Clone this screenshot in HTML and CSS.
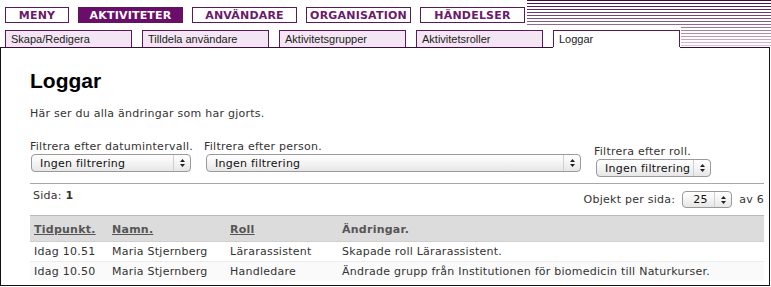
FILE: index.html
```html
<!DOCTYPE html>
<html lang="sv">
<head>
    <meta charset="UTF-8">
    <title>Loggar</title>
    <link rel="stylesheet" href="styles.css">
</head>
<body>
    <div class="header">
        <div class="nav-bar">
            <a class="nav-btn menu">MENY</a>
            <a class="nav-btn active">AKTIVITETER</a>
            <a class="nav-btn">ANVÄNDARE</a>
            <a class="nav-btn">ORGANISATION</a>
            <a class="nav-btn">HÄNDELSER</a>
        </div>
        <div class="tab-bar">
            <a class="tab">Skapa/Redigera</a>
            <a class="tab">Tilldela användare</a>
            <a class="tab">Aktivitetsgrupper</a>
            <a class="tab">Aktivitetsroller</a>
            <a class="tab active">Loggar</a>
        </div>
    </div>

    <div class="main">
        <h1>Loggar</h1>
        <p class="intro">Här ser du alla ändringar som har gjorts.</p>

        <div class="filters">
            <div class="filter">
                <div class="filter-label">Filtrera efter datumintervall.</div>
                <div class="select date-select">
                    <span class="select-text">Ingen filtrering</span>
                    <span class="select-arrows"><svg width="7" height="10" viewBox="0 0 7 10"><path d="M3.5 1 L6 4 L1 4 Z M3.5 9 L6 6 L1 6 Z" fill="#222"/></svg></span>
                </div>
            </div>
            <div class="filter">
                <div class="filter-label">Filtrera efter person.</div>
                <div class="select person-select">
                    <span class="select-text">Ingen filtrering</span>
                    <span class="select-arrows"><svg width="7" height="10" viewBox="0 0 7 10"><path d="M3.5 1 L6 4 L1 4 Z M3.5 9 L6 6 L1 6 Z" fill="#222"/></svg></span>
                </div>
            </div>
            <div class="filter role-filter">
                <div class="filter-label">Filtrera efter roll.</div>
                <div class="select role-select">
                    <span class="select-text">Ingen filtrering</span>
                    <span class="select-arrows"><svg width="7" height="10" viewBox="0 0 7 10"><path d="M3.5 1 L6 4 L1 4 Z M3.5 9 L6 6 L1 6 Z" fill="#222"/></svg></span>
                </div>
            </div>
        </div>

        <div class="divider"></div>

        <div class="pager">
            <span class="page-num">Sida: <b>1</b></span>
            <span class="per-page">
                <span>Objekt per sida:</span>
                <span class="select count-select">
                    <span class="select-text">25</span>
                    <span class="select-arrows"><svg width="7" height="10" viewBox="0 0 7 10"><path d="M3.5 1 L6 4 L1 4 Z M3.5 9 L6 6 L1 6 Z" fill="#222"/></svg></span>
                </span>
                <span>av 6</span>
            </span>
        </div>

        <table class="log-table">
            <thead>
                <tr>
                    <th class="col-time"><a>Tidpunkt.</a></th>
                    <th class="col-name"><a>Namn.</a></th>
                    <th class="col-role"><a>Roll</a></th>
                    <th>Ändringar.</th>
                </tr>
            </thead>
            <tbody>
                <tr>
                    <td>Idag 10.51</td>
                    <td>Maria Stjernberg</td>
                    <td>Lärarassistent</td>
                    <td>Skapade roll Lärarassistent.</td>
                </tr>
                <tr class="alt">
                    <td>Idag 10.50</td>
                    <td>Maria Stjernberg</td>
                    <td>Handledare</td>
                    <td>Ändrade grupp från Institutionen för biomedicin till Naturkurser.</td>
                </tr>
            </tbody>
        </table>
    </div>
</body>
</html>
```

FILE: styles.css
```css
body {
    margin: 0;
    width: 771px;
    font-family: "DejaVu Sans", Verdana, sans-serif;
    font-size: 11px;
    color: #222;
    background: #fff;
}

/* striped header */
.header {
    height: 47px;
    background:
        repeating-linear-gradient(to bottom, transparent 0 1px, #fff 1px 3px),
        linear-gradient(to bottom, #3a083a, #e2c2e2);
}

.nav-bar {
    display: flex;
    gap: 9px;
    width: fit-content;
    height: 27px;
    box-sizing: border-box;
    padding: 7px 2px 0 5px;
    background: #fff;
}

.nav-btn {
    display: flex;
    align-items: center;
    justify-content: center;
    width: 105px;
    height: 16px;
    box-sizing: border-box;
    border: 1px solid #5a1a5a;
    font-weight: bold;
    font-size: 11px;
    color: #6a1a6a;
    letter-spacing: 0.2px;
}

.nav-btn.menu {
    width: 64px;
}

.nav-btn.active {
    background: #6b0e6b;
    color: #fff;
}

.tab-bar {
    display: flex;
    gap: 10px;
    width: fit-content;
    height: 20px;
    box-sizing: border-box;
    padding: 3px 1px 0 5px;
    background: #fff;
}

.tab {
    position: relative;
    width: 127px;
    height: 17px;
    box-sizing: border-box;
    border: 1px solid #5a1a5a;
    border-bottom: none;
    padding: 2px 0 0 5px;
    background: #f3e5f3;
    font-family: "Liberation Sans", Arial, sans-serif;
    font-size: 11px;
    color: #222;
}

.tab.active {
    background: #fff;
    z-index: 1;
    box-shadow: 0 1px 0 #fff;
}

/* content box */
.main {
    width: 770px;
    height: 239px;
    box-sizing: border-box;
    border: 1px solid #111;
    border-top-color: #3a0c3a;
    padding: 0 5px 0 29px;
    overflow: hidden;
    letter-spacing: 0.25px;
}

h1 {
    margin: 21px 0 0;
    font-family: "Liberation Sans", Arial, sans-serif;
    font-size: 21px;
    line-height: 24px;
    letter-spacing: 0;
    color: #000;
}

.intro {
    margin: 14px 0 0;
    line-height: 14px;
    color: #333;
}

.filters {
    display: flex;
    align-items: flex-start;
    margin-top: 19px;
}

.filter-label {
    line-height: 14px;
    color: #333;
}

.filter + .filter {
    margin-left: 11px;
}

.filter.role-filter {
    margin-top: 5px;
    margin-left: 13px;
}

.select {
    display: flex;
    align-items: center;
    height: 18px;
    box-sizing: border-box;
    border: 1px solid #9a9a9a;
    border-radius: 4px;
    background: linear-gradient(to bottom, #fff, #f4f4f4 50%, #e6e6e6);
    color: #111;
}

.select-text {
    flex: 1;
    padding-left: 8px;
    white-space: nowrap;
}

.select-arrows {
    display: flex;
    align-items: center;
    justify-content: center;
    width: 16px;
    height: 100%;
    border-left: 1px solid #d0d0d0;
}

.date-select {
    width: 160px;
    margin-left: 1px;
}

.person-select {
    width: 375px;
    margin-left: 2px;
}

.role-select {
    margin-left: 2px;
}

.role-select .select-text {
    padding-right: 3px;
}

.divider {
    margin-top: 6px;
    border-top: 1px solid #a8a8a8;
}

.pager {
    display: flex;
    justify-content: space-between;
    align-items: flex-start;
    margin-top: 5px;
    line-height: 14px;
    color: #333;
}

.page-num {
    padding-left: 3px;
}

.per-page {
    display: flex;
    align-items: center;
    gap: 7px;
    margin-top: 2px;
}

.count-select {
    width: 50px;
    height: 17px;
}

.count-select .select-text {
    padding-left: 10px;
}

.log-table {
    width: 100%;
    margin-top: 7px;
    border-collapse: collapse;
    color: #333;
}

.log-table th {
    padding: 7px 4px 4px;
    line-height: 14px;
    text-align: left;
    font-weight: bold;
    color: #555;
    background: #dcdcdc;
    border-top: 1px solid #b9b9b9;
    border-bottom: 1px solid #cfcfcf;
}

.log-table th a {
    text-decoration: underline;
}

.col-time {
    width: 70px;
}

.col-name {
    width: 110px;
}

.col-role {
    width: 104px;
}

.log-table td {
    padding: 3px 4px 2px;
    line-height: 14px;
    white-space: nowrap;
}

.log-table tr.alt td {
    border-top: 1px solid #ececec;
    background: #fafafa;
}
```
